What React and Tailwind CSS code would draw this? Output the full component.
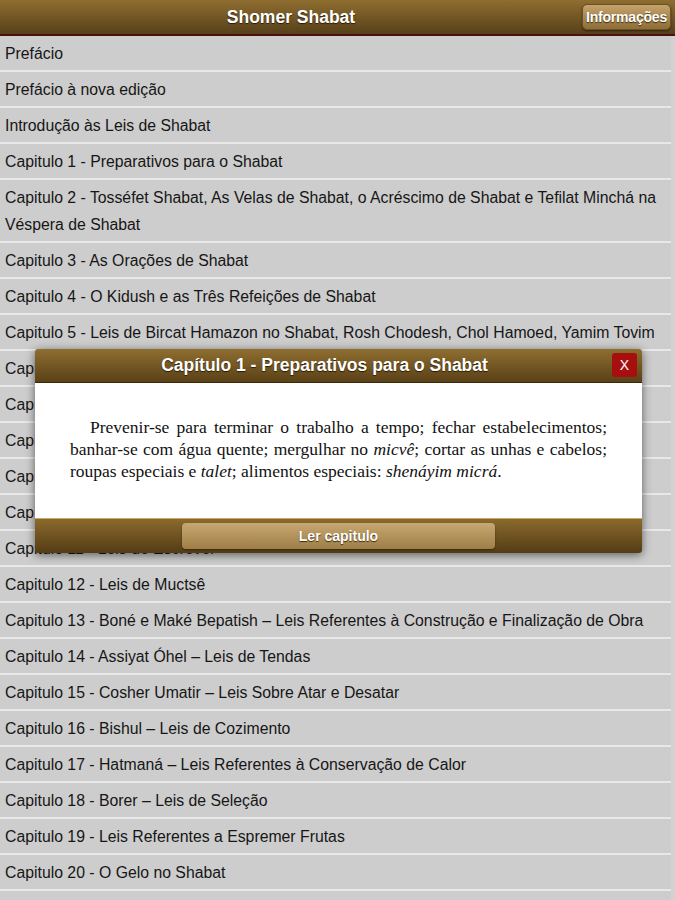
const chapters = [
  'Prefácio',
  'Prefácio à nova edição',
  'Introdução às Leis de Shabat',
  'Capitulo 1 - Preparativos para o Shabat',
  'Capitulo 2 - Tosséfet Shabat, As Velas de Shabat, o Acréscimo de Shabat e Tefilat Minchá na Véspera de Shabat',
  'Capitulo 3 - As Orações de Shabat',
  'Capitulo 4 - O Kidush e as Três Refeições de Shabat',
  'Capitulo 5 - Leis de Bircat Hamazon no Shabat, Rosh Chodesh, Chol Hamoed, Yamim Tovim',
  'Capitulo 6 - Preparo de Alimentos',
  'Capitulo 7 - Leis de Escolha',
  'Capitulo 8 - Leis de Moagem',
  'Capitulo 9 - Leis de Amassar',
  'Capitulo 10 - Leis de Acender e Apagar',
  'Capitulo 11 - Leis de Escrever',
  'Capitulo 12 - Leis de Muctsê',
  'Capitulo 13 - Boné e Maké Bepatish – Leis Referentes à Construção e Finalização de Obra',
  'Capitulo 14 - Assiyat Óhel – Leis de Tendas',
  'Capitulo 15 - Cosher Umatir – Leis Sobre Atar e Desatar',
  'Capitulo 16 - Bishul – Leis de Cozimento',
  'Capitulo 17 - Hatmaná – Leis Referentes à Conservação de Calor',
  'Capitulo 18 - Borer – Leis de Seleção',
  'Capitulo 19 - Leis Referentes a Espremer Frutas',
  'Capitulo 20 - O Gelo no Shabat',
  'Capitulo 21 - Leis de Higiene',
];

const sans = { fontFamily: '"Liberation Sans", Arial, sans-serif' };

export default function App() {
  return (
    <div className="relative h-[900px] overflow-hidden bg-[#d2d2d2]" style={sans}>
      {/* top bar */}
      <div className="flex h-[36px] items-center border-b-2 border-[#4b1010] bg-gradient-to-b from-[#8f6e30] to-[#57401a] pr-[4px]">
        <h1 className="flex-1 text-center text-[17.5px] font-bold text-white [text-shadow:0_1px_1px_#2a1a05]">
          Shomer Shabat
        </h1>
        <button className="h-[26px] rounded-[5px] border border-[#6b5124] bg-gradient-to-b from-[#c4a46c] to-[#8e6d36] px-[3px] text-[14px] font-bold tracking-[-0.2px] text-white shadow-[0_1px_2px_rgba(0,0,0,0.5)] [text-shadow:0_1px_1px_#3a2808]">
          Informações
        </button>
      </div>

      {/* chapter list */}
      <ul className="mr-[4px]">
        {chapters.map((c) => (
          <li
            key={c}
            className="border-b-2 border-[#e8e8e8] bg-[#cdcdcd] pl-[5px] pr-[2px] pt-[4px] pb-[3px] text-[15.8px] leading-[27px] text-[#161616]"
          >
            {c}
          </li>
        ))}
      </ul>

      {/* popup */}
      <div className="absolute left-[35px] top-[349px] w-[607px] overflow-hidden rounded-[3px] shadow-[0_2px_10px_rgba(0,0,0,0.55)]">
        <div className="relative flex h-[34px] items-center justify-center border-b border-[#3a280a] bg-gradient-to-b from-[#8f6e30] to-[#5a4117] pr-[28px]">
          <span className="text-[17.5px] font-bold text-white [text-shadow:0_1px_1px_#2a1a05]">
            Capítulo 1 - Preparativos para o Shabat
          </span>
          <span className="absolute right-[5px] top-[4px] flex h-[24px] w-[25px] items-center justify-center rounded-[3px] bg-[#a70e0e] text-[14px] text-white">
            X
          </span>
        </div>
        <div className="bg-white px-[35px] pt-[33px] pb-[36px]">
          <p
            className="indent-[20px] text-justify text-[17.5px] leading-[22px] text-[#111]"
            style={{ fontFamily: '"Liberation Serif", "Times New Roman", serif' }}
          >
            Prevenir-se para terminar o trabalho a tempo; fechar estabelecimentos; <span className="whitespace-nowrap">banhar-se</span> com água quente; mergulhar no <i>micvê</i>; cortar as unhas e cabelos; roupas especiais e <i>talet</i>; alimentos especiais: <i>shenáyim micrá</i>.
          </p>
        </div>
        <div className="flex h-[35px] items-center justify-center border-t border-[#c9a862] bg-gradient-to-b from-[#8a6a2e] to-[#543c14]">
          <button className="h-[26px] w-[313px] rounded-[4px] bg-gradient-to-b from-[#c8a872] to-[#9f7e47] text-[14px] font-bold text-white shadow-[0_1px_2px_rgba(0,0,0,0.4)] [text-shadow:0_1px_1px_#3a2808]">
            Ler capitulo
          </button>
        </div>
      </div>
    </div>
  );
}
